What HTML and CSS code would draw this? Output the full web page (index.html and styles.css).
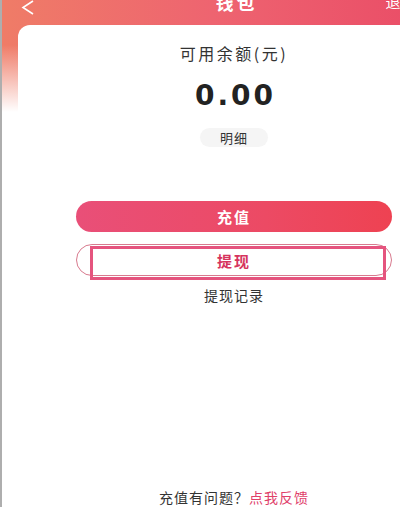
FILE: index.html
```html
<!DOCTYPE html>
<html lang="zh-CN">
<head>
    <meta charset="UTF-8">
    <meta name="viewport" content="width=device-width, initial-scale=1.0">
    <title>钱包</title>
    <link rel="stylesheet" href="styles.css">
</head>
<body>
    <div class="page">
        <!-- Header -->
        <div class="header">
            <div class="back">
                <svg width="14" height="16" viewBox="0 0 14 16">
                    <polyline points="12,1 2,7.5 12,14" fill="none" stroke="#fff" stroke-width="1.6"/>
                </svg>
            </div>
            <div class="title">钱包</div>
            <div class="logout">退出</div>
        </div>

        <!-- Wallet card -->
        <div class="card">
            <div class="label">可用余额(元)</div>
            <div class="amount">0.00</div>
            <div class="detail">明细</div>

            <div class="actions">
                <button class="btn btn-fill">充值</button>
                <div class="outline-wrap">
                    <button class="btn btn-outline">提现</button>
                    <div class="mark"></div>
                </div>
                <div class="record">提现记录</div>
            </div>

            <div class="footer">充值有问题？<span class="link">点我反馈</span></div>
        </div>
    </div>
</body>
</html>
```

FILE: styles.css
```css
/* Reset */
* {
    margin: 0;
    padding: 0;
    box-sizing: border-box;
}

body {
    width: 400px;
    height: 507px;
    overflow: hidden;
    font-family: "Noto Sans CJK SC", "Noto Sans", sans-serif;
    color: #333;
    background: #fff;
}

.page {
    width: 468px;
    height: 507px;
    display: flex;
    flex-direction: column;
    border-left: 2px solid rgba(120, 120, 120, 0.6);
    background:
        linear-gradient(to bottom, rgba(255, 255, 255, 0) 45px, #fff 112px),
        linear-gradient(90deg, #ef7c67, #ee6470 45%, #e94865);
    background-repeat: no-repeat;
    background-size: 100% 115px;
}

.header {
    height: 25px;
    display: grid;
    grid-template-columns: 1fr auto 1fr;
    align-items: start;
    color: #fff;
}

.back {
    padding-left: 19px;
    margin-top: -3px;
}

.title {
    font-size: 18px;
    font-weight: bold;
    letter-spacing: 3px;
    line-height: 20px;
    margin-top: -8px;
    padding-left: 3px;
}

.logout {
    font-size: 15px;
    line-height: 18px;
    margin-top: -7px;
    padding-left: 128px;
}

.card {
    flex: 1;
    margin: 0 18px 0 16px;
    background: #fff;
    border-radius: 12px 12px 0 0;
    padding-top: 18px;
    display: flex;
    flex-direction: column;
    align-items: center;
}

.label {
    font-size: 16px;
    line-height: 20px;
    letter-spacing: 2.5px;
    color: #333;
}

.amount {
    margin-top: 15px;
    font-family: "DejaVu Sans", "Liberation Sans", sans-serif;
    font-size: 28px;
    font-weight: bold;
    line-height: 36px;
    letter-spacing: 3px;
    padding-left: 3px;
    color: #222;
}

.detail {
    margin-top: 14px;
    width: 68px;
    height: 19px;
    line-height: 19px;
    border-radius: 10px;
    background: #f5f5f5;
    font-size: 13px;
    letter-spacing: 1px;
    text-align: center;
    color: #333;
}

.actions {
    margin-top: 54px;
    width: 316px;
    display: flex;
    flex-direction: column;
    align-items: center;
}

.btn {
    width: 100%;
    border-radius: 16px;
    font-family: "Noto Sans CJK SC", sans-serif;
    font-size: 15px;
    font-weight: bold;
    letter-spacing: 2px;
    cursor: pointer;
}

.btn-fill {
    height: 31px;
    border: none;
    color: #fff;
    background: linear-gradient(90deg, #e94f78, #ec4a64 60%, #ee4252);
}

.outline-wrap {
    position: relative;
    width: 100%;
    margin-top: 12px;
}

.btn-outline {
    height: 32px;
    background: #fff;
    border: 1px solid #d87a8e;
    color: #d6345e;
}

/* highlight box drawn over the button */
.mark {
    position: absolute;
    left: 14px;
    top: 2px;
    width: 296px;
    height: 34px;
    border: 3px solid #e5547e;
    pointer-events: none;
}

.record {
    margin-top: 9px;
    font-size: 14px;
    line-height: 20px;
    letter-spacing: 1px;
    color: #333;
}

.footer {
    margin-top: auto;
    font-size: 14px;
    line-height: 20px;
    letter-spacing: 1px;
    color: #333;
}

.link {
    color: #e0406a;
}
```
